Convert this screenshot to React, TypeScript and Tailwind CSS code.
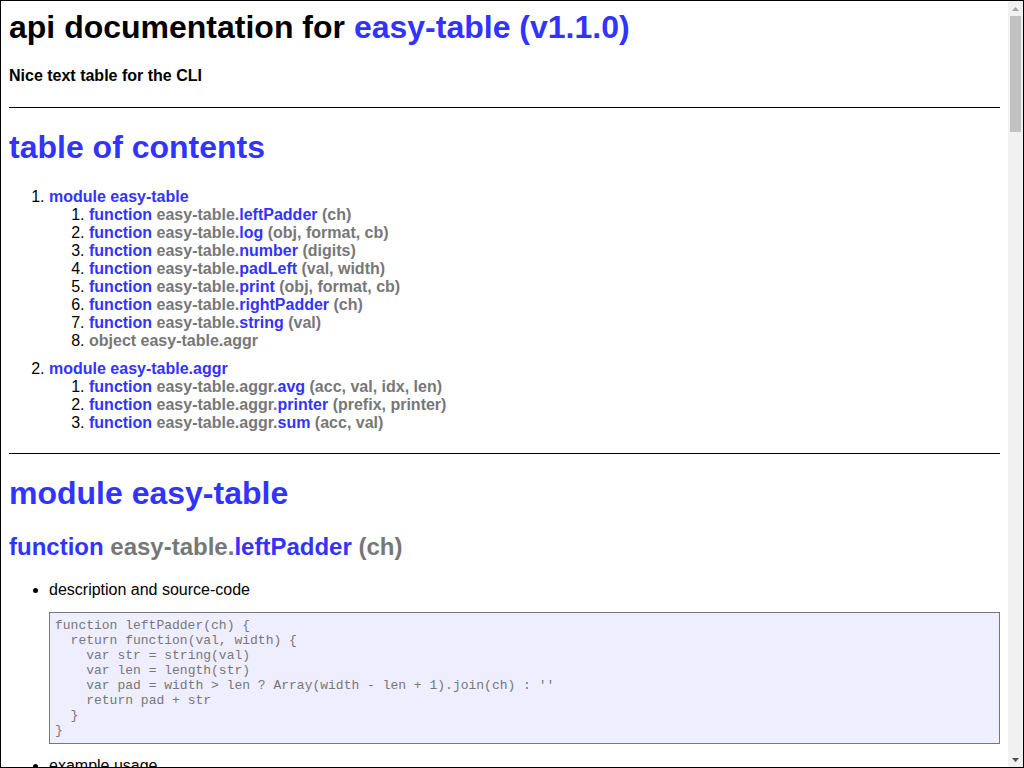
import React from "react";

type Item = {
  kind: "function" | "object";
  prefix: string;
  name: string;
  sig: string;
  source: string;
  example: string;
};

const mod1: Item[] = [
  {
    kind: "function",
    prefix: "easy-table.",
    name: "leftPadder",
    sig: "(ch)",
    source: `function leftPadder(ch) {
  return function(val, width) {
    var str = string(val)
    var len = length(str)
    var pad = width > len ? Array(width - len + 1).join(ch) : ''
    return pad + str
  }
}`,
    example: `...
Table.leftPadder = leftPadder
Table.padLeft = leftPadder(' ')

function rightPadder(ch) {
...`,
  },
  {
    kind: "function",
    prefix: "easy-table.",
    name: "log",
    sig: "(obj, format, cb)",
    source: `function (obj, format, cb) {
  console.log(Table.print(obj, format, cb))
}`,
    example: `...
  return cb(t)
}

Table.log = function(obj, format, cb) {
  console.log(Table.print(obj, format, cb))
}
...`,
  },
  {
    kind: "function",
    prefix: "easy-table.",
    name: "number",
    sig: "(digits)",
    source: `function (digits) {
  return function(val, width) {
    if (val == null) return ''
    if (typeof val != 'number')
      throw new Error(''+val + ' is not a number')
    var str = digits == null ? val+'' : val.toFixed(digits)
    return Table.padLeft(str, width)
  }
}`,
    example: `...
data.forEach(function(product) {
  t.cell('Product Id', product.id)
  t.cell('Description', product.desc)
  t.cell('Price, USD', product.price, Table.number(2))
  t.newRow()
})
...`,
  },
  {
    kind: "function",
    prefix: "easy-table.",
    name: "padLeft",
    sig: "(val, width)",
    source: `function (val, width) {
    var str = string(val)
    var len = length(str)
    var pad = width > len ? Array(width - len + 1).join(ch) : ''
    return pad + str
  }`,
    example: `...
Table.number = function(digits) {
  return function(val, width) {
    if (val == null) return ''
    if (typeof val != 'number')
      throw new Error(''+val + ' is not a number')
    var str = digits == null ? val+'' : val.toFixed(digits)
    return Table.padLeft(str, width)
  }
}
...`,
  },
  {
    kind: "function",
    prefix: "easy-table.",
    name: "print",
    sig: "(obj, format, cb)",
    source: `function (obj, format, cb) {
  var opts = format || {}

  format = typeof format == 'function'
    ? format
    : function(obj, cell) {
      for (var key in obj) {
        if (!obj.hasOwnProperty(key)) continue
        var params = opts[key] || {}
        cell(params.name || key, obj[key], params.printer)
      }
    }

  var t = new Table
  var cell = t.cell.bind(t)

  if (Array.isArray(obj)) {
    cb = cb || function(t) { return t.toString() }
    obj.forEach(function(item) {
      format(item, cell)
      t.newRow()
    })
  } else {
    cb = cb || function(t) { return t.printTransposed({separator: ' : '})}
    format(obj, cell)
    t.newRow()
  }

  return cb(t)
}`,
    example: `...
Table.log = function(obj, format, cb) {
  console.log(Table.print(obj, format, cb))
}
...`,
  },
  {
    kind: "function",
    prefix: "easy-table.",
    name: "rightPadder",
    sig: "(ch)",
    source: `function rightPadder(ch) {
  return function(val, width) {
    var str = string(val)
    var len = length(str)
    var pad = width > len ? Array(width - len + 1).join(ch) : ''
    return str + pad
  }
}`,
    example: `...
var padRight = rightPadder(' ')
Table.rightPadder = rightPadder
Table.padRight = padRight
...`,
  },
  {
    kind: "function",
    prefix: "easy-table.",
    name: "string",
    sig: "(val)",
    source: `function string(val) {
  return val === undefined ? '' : ''+val
}`,
    example: `...
Table.aggr.printer = function(prefix, printer) {
  printer = printer || string
  return function(val, width) {
    return padLeft(prefix + printer(val, width), width)
  }
}
...`,
  },
];

const mod2: Item[] = [
  {
    kind: "function",
    prefix: "easy-table.aggr.",
    name: "avg",
    sig: "(acc, val, idx, len)",
    source: `function (sum, val, idx, len) {
  sum = sum || 0
  sum += val
  return idx + 1 == len ? sum / len : sum
}`,
    example: `...
t.total('Price, USD', {
  printer: Table.aggr.printer('Avg: ', currency),
  reduce: Table.aggr.avg,
  init: 0
})
...`,
  },
  {
    kind: "function",
    prefix: "easy-table.aggr.",
    name: "printer",
    sig: "(prefix, printer)",
    source: `function (prefix, printer) {
  printer = printer || string
  return function(val, width) {
    return padLeft(prefix + printer(val, width), width)
  }
}`,
    example: `...
t.total('Price, USD', {
  printer: Table.aggr.printer('Avg: ', currency),
  reduce: Table.aggr.avg,
  init: 0
})
...`,
  },
  {
    kind: "function",
    prefix: "easy-table.aggr.",
    name: "sum",
    sig: "(acc, val)",
    source: `function (sum, val) {
  sum = sum || 0
  return sum += val
}`,
    example: `...
Table.prototype.total = function(col, opts) {
  opts = opts || {}
  var reduce = opts.reduce || Table.aggr.sum
  var printer = opts.printer || Table.aggr.printer('\\u2211 ', string)
...`,
  },
];

const blue = "text-[#33f] font-bold";
const gray = "text-[#777] font-bold";

function Sig({ it }: { it: Item }) {
  if (it.kind === "object") {
    return <span className={gray}>object {it.prefix}{it.name}</span>;
  }
  return (
    <>
      <span className={blue}>function</span>
      <span className={gray}> {it.prefix}</span>
      <span className={blue}>{it.name}</span>
      <span className={gray}> {it.sig}</span>
    </>
  );
}

const preCls =
  "my-[13px] bg-[#eef] border border-[#777] text-[#777] p-[5px] whitespace-pre-wrap text-[13px] font-['Liberation_Mono','DejaVu_Sans_Mono',monospace]";

function FnSection({ it }: { it: Item }) {
  return (
    <div>
      <h2 className="my-[19.92px] text-[24px] font-bold">
        <Sig it={it} />
      </h2>
      <ul className="my-4 pl-10 list-disc">
        <li>
          description and source-code
          <pre className={preCls}>{it.source}</pre>
        </li>
        <li>
          example usage
          <pre className={preCls}>{it.example}</pre>
        </li>
      </ul>
    </div>
  );
}

function Scrollbar() {
  return (
    <div className="w-[15px] shrink-0 bg-[#f1f1f1] flex flex-col items-center">
      <div className="h-[15px] w-full flex items-center justify-center">
        <svg width="7" height="4" viewBox="0 0 7 4">
          <polygon points="3.5,0 7,4 0,4" fill="#a3a3a3" />
        </svg>
      </div>
      <div className="h-[116px] w-[11px] bg-[#c1c1c1]" />
      <div className="flex-1" />
      <div className="h-[15px] w-full flex items-center justify-center">
        <svg width="7" height="4" viewBox="0 0 7 4">
          <polygon points="0,0 7,0 3.5,4" fill="#505050" />
        </svg>
      </div>
    </div>
  );
}

export default function App() {
  const aggrObj: Item = {
    kind: "object",
    prefix: "easy-table.",
    name: "aggr",
    sig: "",
    source: "",
    example: "",
  };
  return (
    <div className="h-[768px] w-full flex border border-black bg-white text-black text-[16px] leading-[normal] font-['Liberation_Sans',Arial,sans-serif]">
      <div className="flex-1 min-w-0 overflow-hidden">
        <div className="p-2">
          <h1 className="mt-0 mb-[21.44px] text-[32px] font-bold">
            api documentation for <span className="text-[#33f]">easy-table (v1.1.0)</span>
          </h1>
          <h4 className="my-[21.28px] text-[16px] font-bold">Nice text table for the CLI</h4>

          <div className="mt-5 border-t border-black">
            <h1 className="my-[21.44px] text-[32px] font-bold text-[#33f]">table of contents</h1>
            <ol className="my-4 pl-10 list-decimal">
              <li className="mt-[10px]">
                <span className={blue}>module easy-table</span>
                <ol className="pl-10 list-decimal">
                  {mod1.map((it) => (
                    <li key={it.name}>
                      <Sig it={it} />
                    </li>
                  ))}
                  <li>
                    <Sig it={aggrObj} />
                  </li>
                </ol>
              </li>
              <li className="mt-[10px]">
                <span className={blue}>module easy-table.aggr</span>
                <ol className="pl-10 list-decimal">
                  {mod2.map((it) => (
                    <li key={it.name}>
                      <Sig it={it} />
                    </li>
                  ))}
                </ol>
              </li>
            </ol>
          </div>

          <div className="mt-[21px] border-t border-black">
            <h1 className="my-[21.44px] text-[32px] font-bold text-[#33f]">module easy-table</h1>
            {mod1.map((it) => (
              <FnSection key={it.name} it={it} />
            ))}
            <div>
              <h2 className="my-[19.92px] text-[24px] font-bold">
                <Sig it={aggrObj} />
              </h2>
            </div>
          </div>

          <div className="mt-5 border-t border-black">
            <h1 className="my-[21.44px] text-[32px] font-bold text-[#33f]">module easy-table.aggr</h1>
            {mod2.map((it) => (
              <FnSection key={it.name} it={it} />
            ))}
          </div>

          <div className="mt-5 text-center">
            [ this document was created with <span className={blue}>utility2</span> ]
          </div>
        </div>
      </div>
      <Scrollbar />
    </div>
  );
}
